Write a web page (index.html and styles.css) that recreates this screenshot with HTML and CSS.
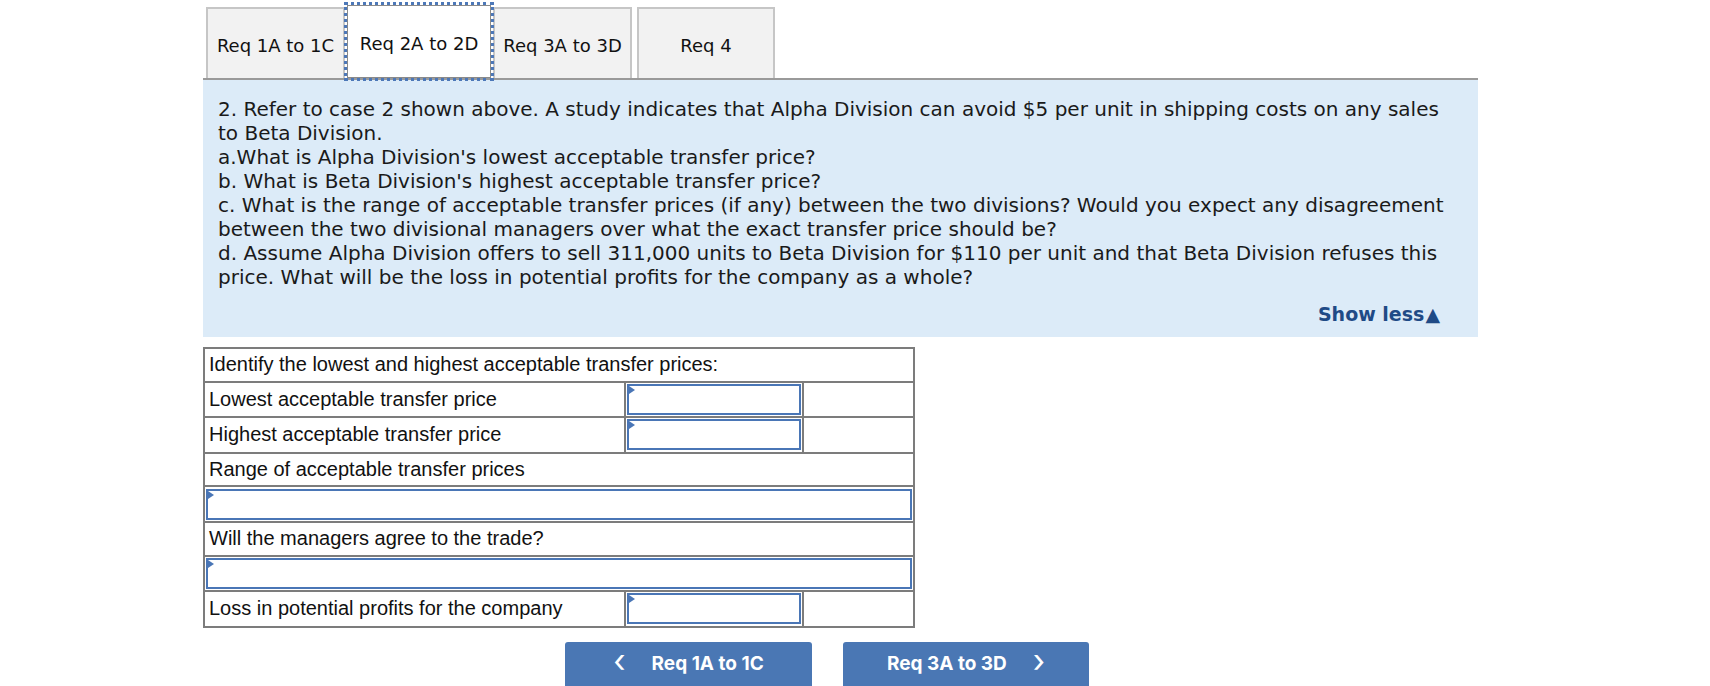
FILE: index.html
```html
<!DOCTYPE html>
<html>
<head>
<meta charset="utf-8">
<link rel="stylesheet" href="styles.css">
</head>
<body>
<div class="wrap">
  <div class="tabs">
    <div class="tab t1">Req 1A to 1C</div>
    <div class="tab t2 active">Req 2A to 2D</div>
    <div class="tab t3">Req 3A to 3D</div>
    <div class="tab t4">Req 4</div>
  </div>
  <div class="panel">
    <div class="q">2. Refer to case 2 shown above. A study indicates that Alpha Division can avoid $5 per unit in shipping costs on any sales to Beta Division.<br>a.What is Alpha Division's lowest acceptable transfer price?<br>b. What is Beta Division's highest acceptable transfer price?<br>c. What is the range of acceptable transfer prices (if any) between the two divisions? Would you expect any disagreement between the two divisional managers over what the exact transfer price should be?<br>d. Assume Alpha Division offers to sell 311,000 units to Beta Division for $110 per unit and that Beta Division refuses this price. What will be the loss in potential profits for the company as a whole?</div>
    <div class="more"><span class="less">Show less<span class="tri">▲</span></span></div>
  </div>
  <table class="grid">
    <colgroup><col class="c1"><col class="c2"><col class="c3"></colgroup>
    <tr><td colspan="3" class="lbl">Identify the lowest and highest acceptable transfer prices:</td></tr>
    <tr><td class="lbl">Lowest acceptable transfer price</td><td class="in"><div class="box"></div></td><td></td></tr>
    <tr><td class="lbl">Highest acceptable transfer price</td><td class="in"><div class="box"></div></td><td></td></tr>
    <tr><td colspan="3" class="lbl">Range of acceptable transfer prices</td></tr>
    <tr><td colspan="3" class="in"><div class="box"></div></td></tr>
    <tr><td colspan="3" class="lbl">Will the managers agree to the trade?</td></tr>
    <tr><td colspan="3" class="in"><div class="box"></div></td></tr>
    <tr><td class="lbl">Loss in potential profits for the company</td><td class="in"><div class="box"></div></td><td></td></tr>
  </table>
  <div class="nav">
    <div class="btn prev"><span class="chev">&lsaquo;</span><span>Req 1A to 1C</span></div>
    <div class="btn next"><span>Req 3A to 3D</span><span class="chev">&rsaquo;</span></div>
  </div>
</div>
</body>
</html>
```
FILE: styles.css
```css
html, body { margin: 0; padding: 0; background: #fff; }
.wrap { margin-left: 203px; padding-top: 8px; width: 1275px; }
.tabs { display: flex; align-items: flex-end; padding-left: 3px; height: 70px; }
.tab {
  box-sizing: border-box;
  height: 71px;
  background: #f2f2f2;
  border: 2px solid #c6c6c6;
  border-bottom: none;
  font-family: "DejaVu Sans", Verdana, sans-serif;
  font-size: 18px;
  color: #111;
  display: flex; align-items: center; justify-content: center;
  padding-top: 4px;
  white-space: nowrap;
}
.t1 { width: 139px; }
.t2 { width: 144px; margin-left: 2px; }
.t3 { width: 139px; margin-left: 2px; }
.t4 { width: 138px; margin-left: 5px; }
.tab.active {
  background: #fff;
  border: 1px solid #8a8a8a;
  outline: 3px dotted #4d78b8;
  outline-offset: 0;
  position: relative; z-index: 2;
  height: 73px;
}
.panel {
  border-top: 2px solid #9a9a9a;
  background: #dcebf8;
  padding: 17px 22px 11px 15px;
  font-family: "DejaVu Sans", Verdana, sans-serif;
  font-size: 20px;
  line-height: 24px;
  color: #1a1a1a;
}
.more { text-align: right; margin-top: 13px; margin-right: 16px; }
.less { color: #1f4a86; font-weight: bold; font-size: 19px; }
.tri { font-size: 19px; margin-left: 1px; }
.grid {
  margin-top: 10px;
  border-collapse: collapse;
  width: 710px;
  table-layout: fixed;
  font-family: "Liberation Sans", Arial, sans-serif;
  font-size: 20px;
  color: #111;
}
.c1 { width: 421px; } .c2 { width: 178px; } .c3 { width: 111px; }
.grid td { border: 2px solid #7c7c7c; height: 31.6px; padding: 0 4px; box-sizing: content-box; white-space: nowrap; }
.grid td.in { padding: 1px 1px; }
.box { position: relative; box-sizing: border-box; height: 31px; border: 2px solid #4a76b6; background: #fff; }
.box::before {
  content: ""; position: absolute; left: 0; top: 0;
  border-left: 6px solid #4a76b6; border-top: 4px solid transparent; border-bottom: 4px solid transparent;
}
.nav { display: flex; gap: 31px; padding-left: 362px; margin-top: 14px; }
.btn {
  box-sizing: border-box; width: 247px; height: 48px;
  background: #4a77b4; color: #fff; border-radius: 3px 3px 0 0;
  font-family: Inter, "Liberation Sans", sans-serif; font-weight: 700; font-size: 19px;
  display: flex; align-items: center; justify-content: center; gap: 26px;
  padding-bottom: 4px;
}
.chev { font-size: 32px; font-weight: 400; line-height: 1; margin-top: -5px; }
.next { width: 246px; }
```
